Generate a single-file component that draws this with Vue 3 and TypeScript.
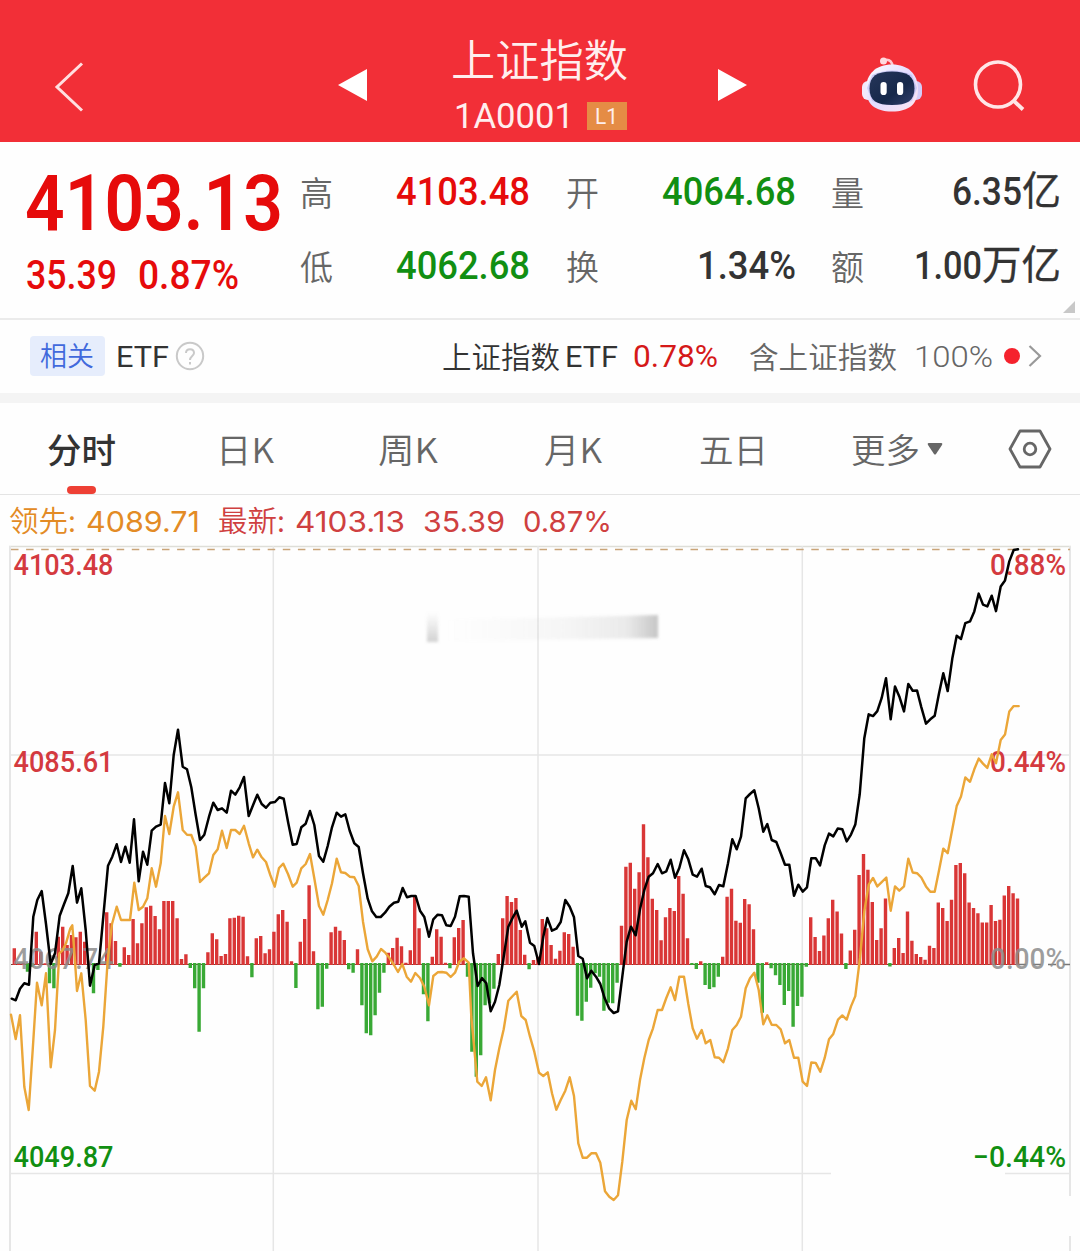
<script setup lang="ts">
import { h } from 'vue'

interface FitProps {
  t: string
  w: number
  size: number
  weight?: number
  font?: string
}

const families: Record<string, string> = {
  cjk: '"Noto Sans CJK SC", sans-serif',
  num: 'Roboto, "Noto Sans CJK SC", sans-serif',
  ui: 'Inter, "Noto Sans CJK SC", sans-serif',
}

// Text fitted to an exact advance width; its box ends on the baseline.
const Fit = (p: FitProps) =>
  h(
    'svg',
    {
      width: p.w,
      height: Math.round(p.size * 0.75),
      style: { display: 'block', overflow: 'visible', flex: 'none' },
    },
    [
      h(
        'text',
        {
          x: 0,
          y: Math.round(p.size * 0.75),
          textLength: p.w,
          lengthAdjust: 'spacingAndGlyphs',
          fill: 'currentColor',
          'font-size': p.size,
          'font-weight': p.weight ?? 400,
          'font-family': families[p.font ?? 'cjk'],
        },
        p.t,
      ),
    ],
  )
Fit.props = ['t', 'w', 'size', 'weight', 'font']

interface Part {
  ox: number
  oy: number
  sy: number
  pts: string
}

const join = (parts: Part[]) =>
  parts
    .flatMap((s) =>
      s.pts.trim().split(/\s+/).map((p) => {
        const [x, y] = p.split(',').map(Number)
        return `${(s.ox + x / 3).toFixed(1)},${(s.oy + y / s.sy).toFixed(1)}`
      }),
    )
    .join(' ')

const price = join([
  { ox: 0, oy: 700, sy: 3, pts: '35,896 47,901 60,866 73,850 87,854 100,650 112,600 125,573 138,672 152,792 165,760 179,647 192,613 205,580 218,498 231,608 244,565 257,690 270,857 284,795 297,790 310,650 324,497 337,470 350,433 363,486 376,440 389,488 402,358 416,544 429,455 442,494 455,392 468,380 482,374 495,249 508,310 521,165 534,89 548,200 561,208 574,262 587,345 600,420 613,404 627,350 640,308 653,330 666,325 680,338 693,272 706,284 719,262 732,231 746,348 759,316 772,284 785,312' },
  { ox: 260, oy: 740, sy: 3, pts: '18,203 31,188 45,186 58,172 71,176 85,250 98,314 110,312 124,262 137,251 150,213 163,255 177,348 190,365 203,318 216,262 230,218 243,230 256,223 269,272 283,310 296,321 309,400 323,476 336,514 349,531 362,531 375,518 388,500 402,488 415,485 428,444 441,472 454,468 467,468 480,512 493,531 507,590 520,538 533,524 546,526 559,556 572,558 585,530 599,469 612,468 626,470 639,640 653,738 666,714 679,730 692,814 705,785 718,735 731,650 745,560 758,533 770,512' },
  { ox: 520, oy: 760, sy: 3, pts: '5,500 16,484 30,548 43,558 57,612 70,530 82,474 96,512 109,506 122,486 136,420 149,440 162,472 175,588 188,596 201,655 214,632 228,650 241,672 254,715 268,746 281,759 294,754 307,650 320,545 333,500 347,526 360,448 373,390 386,350 399,340 413,312 426,340 439,334 452,299 465,353 478,324 492,271 505,298 518,344 531,350 545,326 557,378 570,382 584,403 597,375 610,379 624,310 637,238 650,268 663,230 677,115 690,102 703,91 716,145 730,215 742,192 755,240 769,246 782,280 795,314 808,314 822,407 835,374 848,395 861,382' },
  { ox: 780, oy: 540, sy: 2.8, pts: '94,891 107,891 120,911 134,855 147,822 160,830 173,808 187,810 200,844 213,825 226,797 239,712 253,555 266,488 279,493 292,479 305,442 318,387 332,502 345,410 358,438 372,480 385,403 398,422 411,421 424,468 438,514 451,502 464,492 477,430 490,373 503,423 517,332 530,268 543,277 556,233 570,228 583,200 596,150 609,181 622,186 635,156 648,199 662,130 675,113 688,60 701,28 714,26' },
])

const lead = join([
  { ox: 0, oy: 700, sy: 3, pts: '33,944 47,1017 60,946 73,1160 86,1230 98,1050 111,848 125,916 138,820 152,1102 165,990 178,760 187,752 198,730 211,685 217,676 224,770 231,873 244,820 257,960 270,1158 284,1172 297,1115 310,980 323,780 336,672 350,620 363,660 376,660 390,660 403,548 416,630 429,620 442,595 455,505 468,560 482,490 495,348 508,402 521,320 534,277 548,390 561,404 574,405 587,440 600,546 613,533 627,520 640,465 653,448 666,392 680,444 693,390 706,390 719,402 732,377 746,430 759,472 772,449 785,472 798,486 811,525 824,560' },
  { ox: 260, oy: 740, sy: 3, pts: '57,384 70,371 84,402 98,440 110,428 124,385 137,372 150,342 163,415 177,498 190,524 203,480 216,430 230,356 243,397 256,399 269,410 283,412 296,438 309,545 323,628 337,664 350,650 363,627 376,638 389,655 402,675 414,696 427,672 440,710 453,725 466,699 480,714 493,740 507,796 520,708 533,697 546,696 559,698 572,711 585,698 598,665 612,655 626,668 634,830 652,1025 665,1038 678,1012 692,1081 705,990 718,925 731,868 745,782 758,768 770,755 784,828 797,840 810,890 823,935' },
  { ox: 520, oy: 760, sy: 3, pts: '57,938 70,948 83,937 96,1000 109,1049 122,1020 136,992 149,952 162,1008 175,1150 188,1193 201,1193 214,1180 228,1180 241,1208 255,1294 268,1310 281,1320 294,1306 307,1205 320,1080 334,1022 347,1048 360,960 373,895 386,840 399,805 413,750 426,750 439,714 452,682 465,720 478,650 492,650 505,732 518,805 531,836 545,810 557,850 571,840 584,892 597,893 610,907 624,865 637,810 650,795 663,770 677,685 690,655 703,638 716,690 730,793 742,766 755,794 769,795 782,808 795,850 808,840 822,893 835,893 848,965 861,978' },
  { ox: 780, oy: 540, sy: 2.8, pts: '94,1463 107,1464 121,1489 134,1450 147,1398 160,1383 174,1343 187,1331 200,1343 213,1306 226,1277 240,1170 253,1040 266,965 279,946 292,970 305,958 319,945 332,1038 345,970 358,982 372,970 385,892 398,931 411,933 424,945 438,970 451,985 464,985 477,925 490,864 503,877 517,810 530,745 543,718 556,665 570,677 583,642 596,612 609,626 622,638 635,600 648,625 662,560 675,545 688,480 701,465 716,465' },
])

// Momentum bars: level of each bar's end, grouped with the level of the zero line.
const ZERO = 964
const groups = [
  { zero: 792, unit: 3, v: [745, 788, 788, 815, 800, 695, 755, 790, 850, 865, 710, 680, 735, 705, 712, 695, 725, 790, 880, 810, 792, 637, 670, 723, 800, 742, 765, 657, 730, 670, 622, 617, 648, 688, 603, 603, 603, 655, 777, 763, 804, 865, 995, 865, 757, 700, 718, 768, 762, 655, 653, 647, 650, 769, 832, 715, 708] },
  { zero: 672, unit: 3, v: [640, 628, 575, 523, 510, 545, 664, 744, 605, 537, 436, 634, 808, 800, 686, 577, 560, 572, 600, 688, 698, 628, 796, 880, 886, 826, 758, 698, 638, 624, 593, 619, 668, 631, 470, 565, 763, 844, 650, 568, 590, 668, 685, 592, 564, 540, 710, 935, 1010, 946, 796, 790, 746, 642, 535, 468, 486, 474, 570, 644, 688, 660, 650] },
  { zero: 612, unit: 3, v: [477, 505, 555, 596, 572, 517, 522, 560, 767, 782, 725, 683, 640, 650, 752, 728, 730, 668, 497, 320, 308, 386, 337, 193, 292, 416, 450, 541, 472, 444, 453, 348, 401, 535, 615, 627, 604, 675, 687, 682, 650, 590, 410, 386, 482, 488, 417, 433, 508, 668, 758, 607, 625, 646, 675, 735, 693, 800, 738, 710, 620] },
  { zero: 1188, unit: 2.8, v: [1057, 1112, 1152, 1108, 1060, 1008, 1041, 1103, 1202, 1150, 1092, 939, 880, 924, 1014, 1121, 1088, 1005, 1195, 1143, 1115, 1157, 1041, 1123, 1160, 1168, 1176, 1137, 1143, 1016, 1031, 1068, 1008, 911, 905, 934, 1016, 1031, 1046, 1072, 1072, 1023, 1068, 1064, 996, 970, 990, 1005] },
]
const bars = groups
  .flatMap((g) => g.v.map((y) => (y - g.zero) / g.unit))
  .map((d, i) => ({ x: +(14.3 + 4.4 * i).toFixed(1), d, up: d <= 0 }))
const path = (up: boolean) =>
  bars
    .filter((b) => b.up === up)
    .map((b) => `M${b.x} ${up ? ZERO + 1 : ZERO - 1}V${(ZERO + b.d).toFixed(1)}`)
    .join('')
const upBars = path(true)
const downBars = path(false)

const leftLabels = [
  { t: '4103.48', y: 575, c: 'up' },
  { t: '4085.61', y: 772, c: 'up' },
  { t: '4067.74', y: 969, c: 'flat' },
  { t: '4049.87', y: 1167, c: 'down' },
]
const rightLabels = [
  { t: '0.88%', x: 990, w: 76, y: 575, c: 'up' },
  { t: '0.44%', x: 990, w: 76, y: 772, c: 'up' },
  { t: '0.00%', x: 990, w: 76, y: 969, c: 'flat' },
  { t: '−0.44%', x: 973, w: 93, y: 1167, c: 'down' },
]
</script>

<template>
  <main class="page">
    <header class="head">
      <svg class="back" width="32" height="52" viewBox="0 0 32 52"><path d="M29 2.500 4 26 29 49.500" fill="none" stroke="#ffdfe0" stroke-width="3" /></svg>
      <svg class="prev" width="30" height="32" viewBox="0 0 30 32"><path d="M0 16 29 0V32Z" fill="#fff" /></svg>
      <div class="title">
        <Fit t="上证指数" :w="177" :size="44" :weight="350" />
        <div class="code">
          <Fit t="1A0001" :w="120" :size="34.500" :weight="400" font="num" />
          <span class="level"><Fit t="L1" :w="23" :size="22" :weight="400" font="num" /></span>
        </div>
      </div>
      <svg class="next" width="30" height="32" viewBox="0 0 30 32"><path d="M0 0 29 16 0 32Z" fill="#fff" /></svg>
      <svg class="robot" width="62" height="58" viewBox="0 0 62 58">
        <defs>
          <linearGradient id="shell" x1="0" y1="0" x2="1" y2="1"><stop offset="0" stop-color="#fff" /><stop offset=".5" stop-color="#e3dcff" /><stop offset="1" stop-color="#ffe6f0" /></linearGradient>
          <linearGradient id="face" x1="0" y1="0" x2="1" y2="1"><stop offset="0" stop-color="#26365a" /><stop offset=".6" stop-color="#16284a" /><stop offset="1" stop-color="#33406c" /></linearGradient>
        </defs>
        <path d="M24 5C29 4 31 7 32 12" fill="none" stroke="#ffc9d1" stroke-width="2.500" />
        <circle cx="22.500" cy="6" r="3.500" fill="#ffd9de" />
        <rect x="1" y="26" width="12" height="19" rx="6" fill="#f3e9fb" />
        <rect x="49" y="26" width="12" height="19" rx="6" fill="#d4ccf8" />
        <path d="M31 9.500C47 9.500 57 19 57 34 57 49 48 56.500 31 56.500 14 56.500 5 49 5 34 5 19 15 9.500 31 9.500Z" fill="url(#shell)" />
        <path d="M11 20Q31 11 51 20L56 33 51 46Q31 54 11 46L6 33Z" fill="#b5b8f2" opacity=".6" />
        <path d="M31 16.500C46 16.500 53.500 21 53.500 33.500 53.500 46 46 50 31 50 16 50 8.500 46 8.500 33.500 8.500 21 16 16.500 31 16.500Z" fill="url(#face)" />
        <rect x="19.500" y="27" width="6.200" height="13" rx="3.100" fill="#fff" />
        <rect x="36" y="27" width="6.200" height="13" rx="3.100" fill="#fff" />
      </svg>
      <svg class="search" width="52" height="52" viewBox="0 0 52 52"><circle cx="25" cy="24.500" r="22.500" fill="none" stroke="#ffe6e7" stroke-width="3.600" /><path d="M41 41 50 49.500" stroke="#ffe6e7" stroke-width="3.800" /></svg>
    </header>

    <section class="quote">
      <div class="last red">
        <Fit t="4103.13" :w="258" :size="77" :weight="600" font="num" />
        <div class="change">
          <Fit t="35.39" :w="91" :size="40" :weight="500" font="num" />
          <Fit t="0.87%" :w="101" :size="40" :weight="500" font="num" />
        </div>
      </div>
      <dl class="col c1">
        <div><dt><Fit t="高" :w="33" :size="34" :weight="350" /></dt><dd class="red"><Fit t="4103.48" :w="134" :size="39.500" :weight="500" font="num" /></dd></div>
        <div><dt><Fit t="低" :w="33" :size="34" :weight="350" /></dt><dd class="green"><Fit t="4062.68" :w="134" :size="39.500" :weight="500" font="num" /></dd></div>
      </dl>
      <dl class="col c2">
        <div><dt><Fit t="开" :w="33" :size="34" :weight="350" /></dt><dd class="green"><Fit t="4064.68" :w="134" :size="39.500" :weight="500" font="num" /></dd></div>
        <div><dt><Fit t="换" :w="33" :size="34" :weight="350" /></dt><dd><Fit t="1.34%" :w="99" :size="39.500" :weight="500" font="num" /></dd></div>
      </dl>
      <dl class="col c3">
        <div><dt><Fit t="量" :w="33" :size="34" :weight="350" /></dt><dd><Fit t="6.35" :w="70" :size="39.500" :weight="500" font="num" /><Fit class="unit" t="亿" :w="39" :size="40" :weight="400" /></dd></div>
        <div><dt><Fit t="额" :w="33" :size="34" :weight="350" /></dt><dd><Fit t="1.00" :w="68" :size="39.500" :weight="500" font="num" /><Fit class="unit" t="万亿" :w="79" :size="40" :weight="400" /></dd></div>
      </dl>
      <i class="corner"></i>
    </section>

    <section class="etf">
      <span class="tag"><Fit t="相关" :w="54" :size="27" :weight="350" /></span>
      <Fit class="e1" t="ETF" :w="53" :size="30" font="num" />
      <svg class="help" width="30" height="30" viewBox="0 0 30 30" fill="none" stroke="#c9c9c9" stroke-width="2"><circle cx="15" cy="15" r="13.200" /><path d="M11 12C11 7 19 7 19 12 19 15 15 15 15 19" /><path d="M15 21V23.500" /></svg>
      <Fit class="e2" t="上证指数" :w="118" :size="29.500" :weight="350" />
      <Fit class="e3" t="ETF" :w="53" :size="30" font="num" />
      <Fit class="e4" t="0.78%" :w="85" :size="31" :weight="450" font="num" />
      <Fit class="e5" t="含上证指数" :w="148" :size="29.500" :weight="350" />
      <Fit class="e6" t="100%" :w="79" :size="30" :weight="350" font="num" />
      <i class="dot"></i>
      <svg class="more" width="14" height="24" viewBox="0 0 14 24"><path d="M1.500 2 12 12 1.500 22" fill="none" stroke="#999" stroke-width="2.200" /></svg>
    </section>

    <nav class="tabs">
      <span class="tab on"><Fit t="分时" :w="69" :size="34.500" :weight="500" /></span>
      <span class="tab t2"><Fit t="日K" :w="58" :size="34.500" :weight="350" /></span>
      <span class="tab t3"><Fit t="周K" :w="60" :size="34.500" :weight="350" /></span>
      <span class="tab t4"><Fit t="月K" :w="58" :size="34.500" :weight="350" /></span>
      <span class="tab t5"><Fit t="五日" :w="69" :size="34.500" :weight="350" /></span>
      <span class="tab t6"><Fit t="更多" :w="69" :size="34.500" :weight="350" /></span>
      <svg class="caret" width="16" height="12" viewBox="0 0 16 12"><path d="M1.500 0H14.500Q16 .5 15 2L9 11Q8 12 7 11L1 2Q0 .5 1.500 0Z" fill="#666" /></svg>
      <svg class="gear" width="44" height="40" viewBox="0 0 44 40" fill="none" stroke="#666" stroke-width="2.800"><path d="M12 2H32L42 20 32 38H12L2 20Z" stroke-linejoin="round" /><circle cx="22" cy="20" r="5.800" /></svg>
    </nav>

    <div class="legend">
      <span class="orange"><Fit t="领先:" :w="67" :size="29" :weight="350" /></span>
      <span class="orange l2"><Fit t="4089.71" :w="114" :size="29" :weight="400" font="ui" /></span>
      <span class="l3"><Fit t="最新:" :w="67" :size="29" :weight="350" /></span>
      <span class="l4"><Fit t="4103.13" :w="110" :size="29" :weight="400" font="ui" /></span>
      <span class="l5"><Fit t="35.39" :w="82" :size="29" :weight="400" font="ui" /></span>
      <span class="l6"><Fit t="0.87%" :w="89" :size="29" :weight="400" font="ui" /></span>
    </div>

    <svg class="chart" width="1080" height="711" viewBox="0 540 1080 711">
      <defs>
        <linearGradient id="smear"><stop offset="0" stop-color="#999" stop-opacity="0" /><stop offset=".55" stop-color="#999" stop-opacity=".08" /><stop offset=".85" stop-color="#888" stop-opacity=".17" /><stop offset="1" stop-color="#777" stop-opacity=".42" /></linearGradient>
        <linearGradient id="smudge" x1="0" y1="0" x2="0" y2="1"><stop offset="0" stop-color="#999" stop-opacity="0" /><stop offset="1" stop-color="#888" stop-opacity=".38" /></linearGradient>
        <filter id="soft"><feGaussianBlur stdDeviation="1.500" /></filter>
      </defs>
      <g stroke="#e6e6e6" stroke-width="1.500">
        <path d="M9 546.500H1071" stroke="#deded8" />
        <path d="M10 546V1251M1070 546V1196M1070 1236V1251" stroke-width="2" />
        <path d="M273.300 546V1251M538 546V1251M802.300 546V1251M10 755H1070M10 1173.500H831M1005 1173.500H1070" />
      </g>
      <g filter="url(#soft)">
        <rect x="427" y="612" width="11" height="30" fill="url(#smudge)" />
        <path d="M445 620 658 615V638L445 641Z" fill="url(#smear)" />
      </g>
      <path d="M11 549.500H1070" stroke="#c9a478" stroke-width="1.300" stroke-dasharray="7.500 7.600" />
      <path d="M11 964.500H1018" stroke="#6b4a3a" stroke-width="1" stroke-dasharray="3 1.400" />
      <path d="M1018 964.500H1070" stroke="#777" stroke-width="1.300" stroke-dasharray="8 7" />
      <path :d="upBars" stroke="#d93636" stroke-width="3.400" />
      <path :d="downBars" stroke="#39a935" stroke-width="3.400" />
      <g class="axis">
        <text v-for="l in leftLabels" :key="l.t" x="13.500" :y="l.y" textLength="100" lengthAdjust="spacingAndGlyphs" :class="l.c">{{ l.t }}</text>
        <text v-for="l in rightLabels" :key="l.t" :x="l.x" :y="l.y" :textLength="l.w" lengthAdjust="spacingAndGlyphs" :class="l.c">{{ l.t }}</text>
      </g>
      <g fill="none" stroke-linejoin="round" stroke-linecap="round">
        <polyline :points="lead" stroke="#eba638" stroke-width="2.400" />
        <polyline :points="price" stroke="#000" stroke-width="2.500" />
      </g>
    </svg>
  </main>
</template>

<style>
body {
  margin: 0;
  background: #fff;
}
</style>

<style scoped>
.page {
  width: 1080px;
  height: 1251px;
  overflow: hidden;
  background: #fefefe;
  color: #333;
  font-family: Roboto, "Noto Sans CJK SC", sans-serif;
}
.head {
  height: 142px;
  display: flex;
  align-items: flex-start;
  background: #f22f37;
  color: #ffeeee;
}
.head > * { flex: none; }
.back { margin: 61px 0 0 53px; }
.prev { margin: 69px 0 0 253px; }
.title {
  width: 177px;
  margin: 44px 0 0 83px;
}
.code {
  display: flex;
  align-items: flex-start;
  margin: 25px 0 0 3px;
}
.level {
  box-sizing: border-box;
  width: 40px;
  height: 28px;
  margin: 0 0 0 13px;
  padding: 5px 0 0 8px;
  background: #e58c45;
}
.next { margin: 69px 0 0 90px; }
.robot { margin: 55px 0 0 113px; }
.search { margin: 60px 0 0 50px; }

.quote {
  position: relative;
  box-sizing: border-box;
  height: 178px;
  display: flex;
  border-bottom: 2px solid #ebebeb;
}
.red { color: #e60b0b; }
.green { color: #118f12; }
.last {
  width: 259px;
  margin: 30px 0 0 25px;
}
.change {
  display: flex;
  gap: 21px;
  margin: 29px 0 0 1px;
}
.col {
  margin: 33px 0 0;
  flex: none;
}
.col > div {
  display: flex;
  justify-content: space-between;
  align-items: flex-end;
  height: 30px;
  margin-bottom: 44px;
}
.c1 { width: 230px; margin-left: 16px; }
.c2 { width: 230px; margin-left: 36px; }
.c3 { width: 230px; margin-left: 35px; }
dt {
  color: #666;
  transform: translateY(1px);
}
dd {
  display: flex;
  align-items: flex-end;
  margin: 0;
}
.unit {
  stroke: currentColor;
  stroke-width: 0.35px;
}
.corner {
  position: absolute;
  right: 5px;
  bottom: 5px;
  border-left: 12px solid transparent;
  border-bottom: 12px solid #c8c8c8;
}

.etf {
  height: 73px;
  display: flex;
  align-items: flex-start;
  border-bottom: 10px solid #f4f4f4;
}
.etf > * { flex: none; }
.tag {
  box-sizing: border-box;
  width: 75px;
  height: 40px;
  margin: 16px 0 0 30px;
  padding: 10px 0 0 10px;
  border-radius: 4px;
  background: #e6edfc;
  color: #4169dc;
}
.e1 { margin: 24px 0 0 11px; }
.help { margin: 21px 0 0 6px; }
.e2 { margin: 26px 0 0 237px; }
.e3 { margin: 24px 0 0 5px; }
.e4 { margin: 24px 0 0 15px; color: #d51919; }
.e5 { margin: 26px 0 0 31px; color: #666; }
.e6 { margin: 24px 0 0 17px; color: #666; }
.dot {
  width: 16px;
  height: 16px;
  margin: 28px 0 0 11px;
  border-radius: 50%;
  background: #f5222d;
}
.more { margin: 24px 0 0 8px; }

.tabs {
  box-sizing: border-box;
  height: 92px;
  display: flex;
  align-items: flex-start;
  border-bottom: 1px solid #e4e4e4;
  color: #666;
}
.tabs > * { flex: none; }
.tab { padding-top: 34px; }
.on {
  position: relative;
  margin-left: 47px;
  color: #333;
}
.on::after {
  content: "";
  position: absolute;
  left: 20px;
  top: 83px;
  width: 29px;
  height: 8px;
  border-radius: 4px;
  background: #ee4035;
}
.t2 { margin-left: 100px; }
.t3 { margin-left: 104px; }
.t4 { margin-left: 106px; }
.t5 { margin-left: 97px; }
.t6 { margin-left: 83px; }
.caret { margin: 40px 0 0 7px; }
.gear { margin: 26px 0 0 65px; }

.legend {
  height: 45px;
  display: flex;
  color: #cf4040;
}
.legend > span {
  flex: none;
  padding-top: 15px;
}
.legend > span:first-child { margin-left: 9px; }
.legend .orange { color: #e38b25; }
.l2 { margin-left: 10px; }
.l3 { margin-left: 18px; }
.l4 { margin-left: 10px; }
.l5 { margin-left: 18px; }
.l6 { margin-left: 18px; }

.chart { display: block; }
.axis {
  font: 500 29.5px Roboto, sans-serif;
}
.up { fill: #d43a3f; }
.down { fill: #118f12; }
.flat { fill: #8c8c8c; fill-opacity: .85; }
</style>
